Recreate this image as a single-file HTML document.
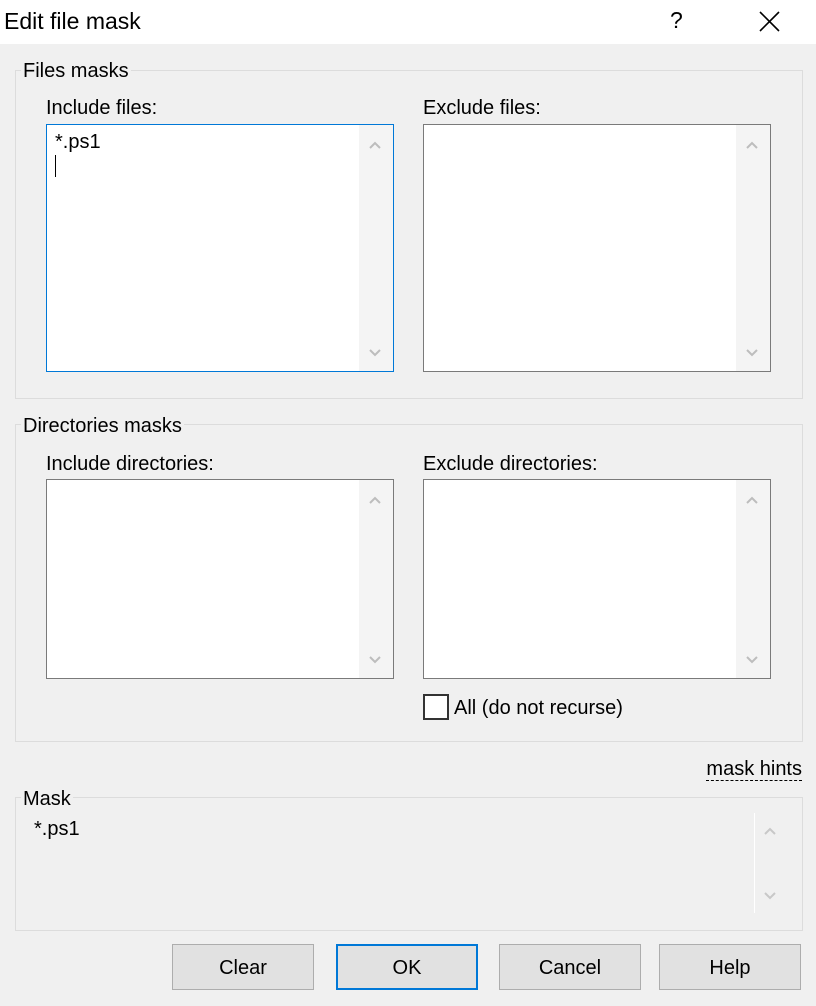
<!DOCTYPE html>
<html><head><style>
*{box-sizing:border-box;margin:0;padding:0}
body{width:816px;height:1006px;background:#f0f0f0;font-family:"Liberation Sans",sans-serif;font-size:20px;color:#000;position:relative;overflow:hidden}
.a{position:absolute}
.title{left:0;top:0;width:816px;height:44px;background:#fff}
.grp{border:1px solid #dcdcdc}
.lbl{background:#f0f0f0;padding:0 2px;line-height:22px}
.ta{background:#fff;border:1px solid #7a7a7a}
.sb{position:absolute;top:0;right:0;width:34px;bottom:0;background:#f4f4f4}
.ar{position:absolute;left:10px;width:12px;height:12px;color:#bdbdbd}
.btn{background:#e1e1e1;border:1px solid #adadad;text-align:center;line-height:46px;height:46px;width:142px;top:944px}
</style></head><body>
<div class="a title"></div>
<div class="a" style="left:4px;top:8px;font-size:23px">Edit file mask</div>
<div class="a" style="left:670px;top:7px;font-size:23px">?</div>
<svg class="a" style="left:759px;top:11px" width="21" height="21"><path d="M1 1L20 20M20 1L1 20" stroke="#000" stroke-width="1.6"/></svg>

<div class="a grp" style="left:15px;top:70px;width:788px;height:329px"></div>
<div class="a lbl" style="left:21px;top:60px">Files masks</div>
<div class="a" style="left:46px;top:97px">Include files:</div>
<div class="a" style="left:423px;top:97px">Exclude files:</div>
<div class="a ta" style="left:46px;top:124px;width:348px;height:248px;border-color:#0078d7"><div style="position:absolute;left:8px;top:6px">*.ps1</div><div style="position:absolute;left:8px;top:30px;width:1px;height:22px;background:#000"></div><div class="sb"><svg class="ar" style="top:14px" viewBox="0 0 12 12"><path d="M1 9L6 4L11 9" fill="none" stroke="#bdbdbd" stroke-width="2"/></svg><svg class="ar" style="bottom:12px" viewBox="0 0 12 12"><path d="M1 3L6 8L11 3" fill="none" stroke="#bdbdbd" stroke-width="2"/></svg></div></div>
<div class="a ta" style="left:423px;top:124px;width:348px;height:248px"><div class="sb"><svg class="ar" style="top:14px" viewBox="0 0 12 12"><path d="M1 9L6 4L11 9" fill="none" stroke="#bdbdbd" stroke-width="2"/></svg><svg class="ar" style="bottom:12px" viewBox="0 0 12 12"><path d="M1 3L6 8L11 3" fill="none" stroke="#bdbdbd" stroke-width="2"/></svg></div></div>

<div class="a grp" style="left:15px;top:424px;width:788px;height:318px"></div>
<div class="a lbl" style="left:21px;top:415px">Directories masks</div>
<div class="a" style="left:46px;top:453px">Include directories:</div>
<div class="a" style="left:423px;top:453px">Exclude directories:</div>
<div class="a ta" style="left:46px;top:479px;width:348px;height:200px"><div class="sb"><svg class="ar" style="top:14px" viewBox="0 0 12 12"><path d="M1 9L6 4L11 9" fill="none" stroke="#bdbdbd" stroke-width="2"/></svg><svg class="ar" style="bottom:12px" viewBox="0 0 12 12"><path d="M1 3L6 8L11 3" fill="none" stroke="#bdbdbd" stroke-width="2"/></svg></div></div>
<div class="a ta" style="left:423px;top:479px;width:348px;height:200px"><div class="sb"><svg class="ar" style="top:14px" viewBox="0 0 12 12"><path d="M1 9L6 4L11 9" fill="none" stroke="#bdbdbd" stroke-width="2"/></svg><svg class="ar" style="bottom:12px" viewBox="0 0 12 12"><path d="M1 3L6 8L11 3" fill="none" stroke="#bdbdbd" stroke-width="2"/></svg></div></div>
<div class="a" style="left:423px;top:694px;width:26px;height:26px;border:2px solid #333;background:#fff"></div>
<div class="a" style="left:454px;top:697px">All (do not recurse)</div>

<div class="a" style="right:14px;top:758px;border-bottom:1px dashed #000;line-height:22px">mask hints</div>

<div class="a grp" style="left:15px;top:797px;width:788px;height:134px"></div>
<div class="a lbl" style="left:21px;top:788px">Mask</div>
<div class="a" style="left:34px;top:818px">*.ps1</div>
<div class="a" style="left:754px;top:813px;width:1px;height:100px;background:#fff"></div>
<svg class="a" style="left:764px;top:825px" width="12" height="12"><path d="M1 9L6 4L11 9" fill="none" stroke="#c8c8c8" stroke-width="2"/></svg>
<svg class="a" style="left:764px;top:890px" width="12" height="12"><path d="M1 3L6 8L11 3" fill="none" stroke="#c8c8c8" stroke-width="2"/></svg>

<div class="a btn" style="left:172px">Clear</div>
<div class="a btn" style="left:336px;border:2px solid #0078d7;line-height:44px">OK</div>
<div class="a btn" style="left:499px">Cancel</div>
<div class="a btn" style="left:659px">Help</div>
</body></html>
